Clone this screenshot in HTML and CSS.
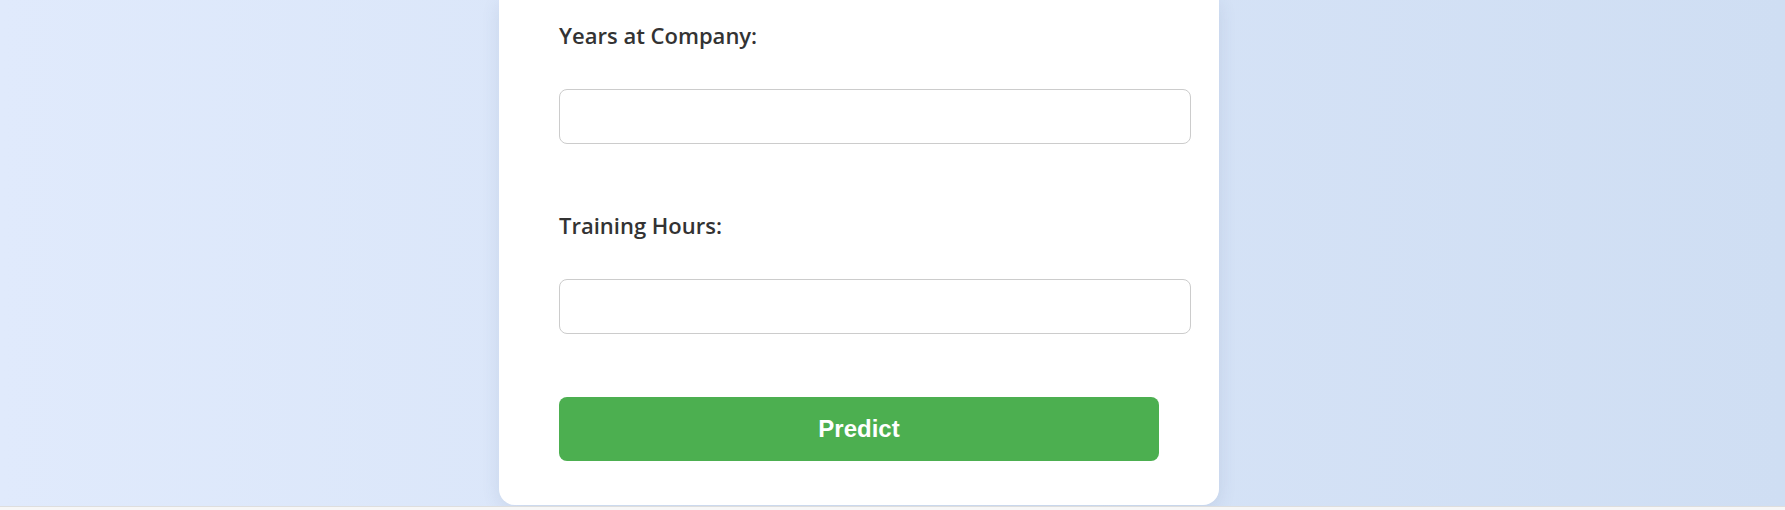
FILE: index.html
```html
<!DOCTYPE html>
<html lang="en">
<head>
<meta charset="utf-8">
<title>Prediction</title>
<link rel="stylesheet" href="styles.css">
</head>
<body>
<div class="page">
  <form class="card">
    <div class="group">
      <label class="label" for="years">Years at Company:</label>
      <input class="field" id="years" type="text">
    </div>
    <div class="group">
      <label class="label" for="hours">Training Hours:</label>
      <input class="field" id="hours" type="text">
    </div>
    <button class="btn" type="button">Predict</button>
  </form>
</div>
<div class="strip"></div>
</body>
</html>
```
FILE: styles.css
```css
html {
  background: #f7f7f7;
}
body {
  margin: 0;
  overflow: hidden;
}
.page {
  height: 506px;
  box-sizing: border-box;
  background: linear-gradient(to right, #e0eafc, #cfdef3);
  padding-left: 499px;
  display: flex;
  align-items: flex-start;
  overflow: hidden;
}
.card {
  width: 720px;
  box-sizing: border-box;
  background: #ffffff;
  border-radius: 0 0 16px 16px;
  box-shadow: 0 4px 18px rgba(60, 80, 120, 0.12);
  padding: 21px 60px 44px;
  display: flex;
  flex-direction: column;
}
.group {
  display: flex;
  flex-direction: column;
  margin-bottom: 67px;
}
.group + .group {
  margin-bottom: 63px;
}
.label {
  font-family: "Open Sans", "Noto Sans", sans-serif;
  font-weight: 600;
  font-size: 22px;
  line-height: 28px;
  color: #333333;
  margin-bottom: 40px;
}
.field {
  width: 100%;
  box-sizing: content-box;
  height: 23px;
  padding: 15px;
  border: 1px solid #cccccc;
  border-radius: 8px;
  background: #ffffff;
  font-size: 16px;
  font-family: "Open Sans", sans-serif;
  outline: none;
}
.btn {
  height: 64px;
  width: 100%;
  border: none;
  border-radius: 8px;
  background: #4caf50;
  color: #ffffff;
  font-family: "Liberation Sans", Arial, sans-serif;
  font-weight: 700;
  font-size: 24px;
  cursor: pointer;
}
.strip {
  height: 4px;
  border-top: 1px solid #dedede;
  background: #f7f7f7;
}
```
